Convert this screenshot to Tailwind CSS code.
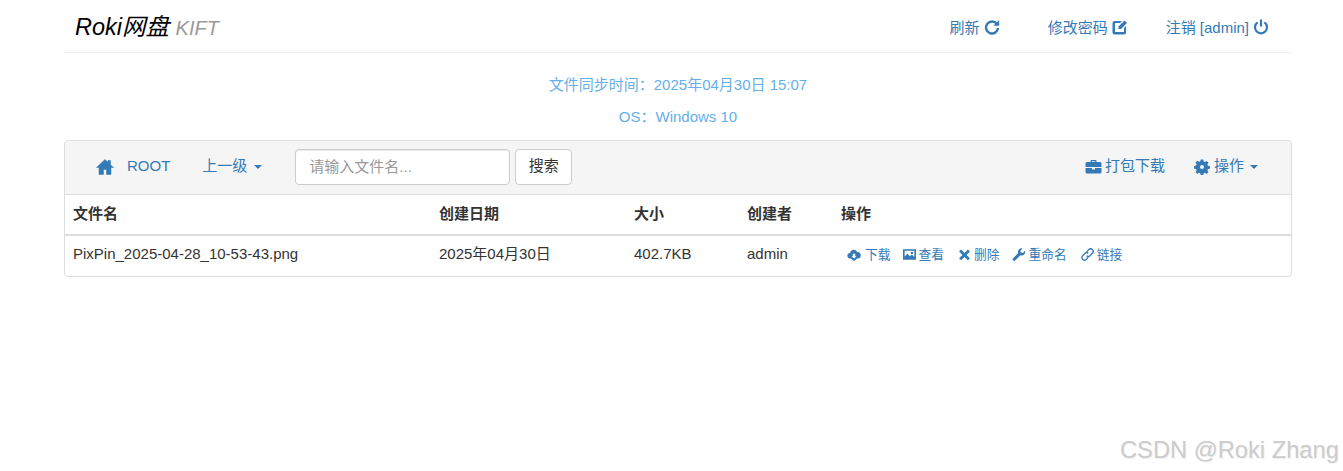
<!DOCTYPE html>
<html lang="en">
<head>
    <meta charset="UTF-8">
    <title>Roki网盘 KIFT</title>
    <script src="https://cdn.jsdelivr.net/npm/@tailwindcss/browser@4"></script>
</head>
<body class="relative h-[471px] overflow-hidden bg-white font-['Liberation_Sans','Noto_Sans_CJK_SC',sans-serif] text-[15px] text-[#333]">

    <div class="ml-[64px] w-[1228px]">

        <!-- Header -->
        <header class="flex h-[53px] items-center justify-between border-b border-[#eee] pt-[3px]">
            <h1 class="pl-[11px] text-[23.5px] italic text-black">Roki网盘 <span class="text-[20px] text-[#999]">KIFT</span></h1>
            <nav class="flex items-center pt-[2px] text-[#337ab7]">
                <a class="flex items-center gap-[4px]">刷新
                    <svg class="mb-[3px] h-[16px] w-[16px]" viewBox="0 0 16 16" fill="none" stroke="currentColor" stroke-width="2.4"><path d="M13 5.2A6 6 0 1 0 14 9"/><path d="M15.2 1v5.8H9.400z" fill="currentColor" stroke="none"/></svg>
                </a>
                <a class="ml-[48px] flex items-center gap-[4px]">修改密码
                    <svg class="mb-[3px] h-[16px] w-[16px]" viewBox="0 0 16 16" fill="currentColor"><path d="M2.500 2H10L8 4H3.500a.5.5 0 0 0-.5.5v8a.5.5 0 0 0 .5.5h8a.5.5 0 0 0 .5-.5V9l2-2v6.500a2 2 0 0 1-2 2H2.500a2 2 0 0 1-2-2v-9.500a2 2 0 0 1 2-2z"/><path d="M12.500 1.500l2.500 2.500-6 6H6.500V7.500z"/></svg>
                </a>
                <a class="ml-[38px] mr-[23px] flex items-center gap-[4px]">注销 [admin]
                    <svg class="mb-[3px] h-[16px] w-[16px]" viewBox="0 0 16 16" fill="none" stroke="currentColor" stroke-width="2.2"><path d="M4.600 3.400a6 6 0 1 0 6.800 0"/><path d="M8 .5v7"/></svg>
                </a>
            </nav>
        </header>

        <!-- Sync info -->
        <div class="flex flex-col items-center pt-[21px] text-[#66afe9]">
            <p class="h-[32px] leading-[21px]">文件同步时间：2025年04月30日 15:07</p>
            <p class="h-[34px] leading-[21px]">OS：Windows 10</p>
        </div>

        <!-- File panel -->
        <main class="overflow-hidden rounded-[4px] border border-[#ddd]">
            <div class="flex h-[54px] items-center justify-between border-b border-[#ddd] bg-[#f5f5f5] pb-[2px] text-[#337ab7]">
                <div class="flex items-center">
                    <svg class="ml-[31px] h-[18px] w-[18px]" viewBox="0 0 18 18" fill="currentColor" stroke="currentColor" stroke-width=".5"><path d="M9 1.500L.5 9.500h2.500v7h4.500v-5h3v5H15v-7h2.500L14.500 6.700V2.500h-2.500v1.800z"/></svg>
                    <span class="ml-[13px]">ROOT</span>
                    <span class="ml-[32px]">上一级</span>
                    <span class="ml-[7px] h-0 w-0 border-x-[4px] border-t-[4px] border-x-transparent border-t-current"></span>
                    <input class="ml-[33px] h-[36px] w-[215px] rounded-[4px] border border-[#ccc] bg-white px-[13px] text-[#555] shadow-[inset_0_1px_1px_rgba(0,0,0,0.075)] placeholder:text-[#999]" placeholder="请输入文件名...">
                    <button class="ml-[5px] h-[36px] w-[57px] rounded-[4px] border border-[#ccc] bg-white text-[#333]">搜索</button>
                </div>
                <div class="flex items-center pr-[33px]">
                    <svg class="h-[16px] w-[17px]" viewBox="0 0 16 16" fill="currentColor"><path d="M5 3V2a1 1 0 0 1 1-1h4a1 1 0 0 1 1 1v1h3.500A1.500 1.500 0 0 1 16 4.500V8H0V4.500A1.500 1.500 0 0 1 1.500 3zm1.300 0h3.400V2.300H6.300zM0 9h6.500v1.500h3V9H16v4a1.500 1.500 0 0 1-1.500 1.500h-13A1.500 1.500 0 0 1 0 13z"/></svg>
                    <span class="ml-[3px]">打包下载</span>
                    <svg class="ml-[29px] h-[16px] w-[16px]" viewBox="0 0 16 16" fill="currentColor" fill-rule="evenodd"><path d="M6.700.5h2.600l.4 2 1.300.5 1.700-1.100 1.800 1.800-1.100 1.700.5 1.300 2 .4v2.600l-2 .4-.5 1.300 1.100 1.700-1.800 1.800-1.700-1.100-1.300.5-.4 2H6.700l-.4-2-1.300-.5-1.700 1.100-1.800-1.800 1.100-1.700-.5-1.300-2-.4V6.900l2-.4.5-1.300-1.100-1.700 1.800-1.800 1.700 1.100 1.300-.5zM8 6a2 2 0 1 0 0 4 2 2 0 0 0 0-4z"/></svg>
                    <span class="ml-[4px]">操作</span>
                    <span class="ml-[6px] h-0 w-0 border-x-[4px] border-t-[4px] border-x-transparent border-t-current"></span>
                </div>
            </div>

            <table class="w-full table-fixed">
                <thead>
                    <tr class="h-[40px] border-b-2 border-[#ddd] text-left">
                        <th class="w-[366px] pl-[8px] font-bold">文件名</th>
                        <th class="w-[195px] pl-[8px] font-bold">创建日期</th>
                        <th class="w-[113px] pl-[8px] font-bold">大小</th>
                        <th class="w-[94px] pl-[8px] font-bold">创建者</th>
                        <th class="pl-[8px] font-bold">操作</th>
                    </tr>
                </thead>
                <tbody>
                    <tr class="h-[41px]">
                        <td class="pb-[3px] pl-[8px]">PixPin_2025-04-28_10-53-43.png</td>
                        <td class="pb-[3px] pl-[8px]">2025年04月30日</td>
                        <td class="pb-[3px] pl-[8px]">402.7KB</td>
                        <td class="pb-[3px] pl-[8px]">admin</td>
                        <td class="pb-[3px] pl-[14px]">
                            <div class="flex items-center text-[12.75px] text-[#337ab7]">
                                <svg class="h-[13px] w-[14px]" viewBox="0 0 16 16" fill="currentColor"><path d="M4 13H3.500a3.500 3.500 0 0 1-.3-7A4.500 4.500 0 0 1 11.800 4.800 4 4 0 0 1 12.500 13H12l-4 3zM6.500 7v3H4.800L8 13l3.200-3H9.500V7z" fill-rule="evenodd"/></svg>
                                <span class="ml-[4px]">下载</span>
                                <svg class="ml-[12px] h-[13px] w-[13px]" viewBox="0 0 16 16" fill="currentColor" fill-rule="evenodd"><path d="M0 1.500h16v13H0zM2 3.500v7l3.500-3.500 3 3 2.500-2 3 3V3.500zM11 4.500a1.500 1.500 0 1 1 0 3 1.500 1.500 0 0 1 0-3z"/></svg>
                                <span class="ml-[3px]">查看</span>
                                <svg class="ml-[14px] h-[13px] w-[13px]" viewBox="0 0 16 16" fill="currentColor"><path d="M3.800 1.800L8 6l4.200-4.200 2.500 2.500L10.500 8.500l4.200 4.200-2.500 2.500L8 11l-4.200 4.200-2.500-2.500 4.200-4.200-4.200-4.200z"/></svg>
                                <span class="ml-[3px]">删除</span>
                                <svg class="ml-[12px] h-[13px] w-[14px]" viewBox="0 0 16 16" fill="currentColor"><path d="M15.500 3.500l-2.800 2.800-2.300-.7-.7-2.300L12.500.5a4.500 4.500 0 0 0-5.500 5.800L.8 12.500a1.800 1.800 0 0 0 2.700 2.700L9.700 9a4.500 4.500 0 0 0 5.800-5.500z"/></svg>
                                <span class="ml-[3px]">重命名</span>
                                <svg class="ml-[14px] h-[13px] w-[13px]" viewBox="0 0 16 16" fill="none" stroke="currentColor" stroke-width="1.700"><path d="M7 4.500l2.500-2.500a3 3 0 0 1 4.500 4.500L11 9.500a3 3 0 0 1-4 0"/><path d="M9 11.500L6.500 14A3 3 0 0 1 2 9.500L5 6.500a3 3 0 0 1 4 0"/></svg>
                                <span class="ml-[3px]">链接</span>
                            </div>
                        </td>
                    </tr>
                </tbody>
            </table>
        </main>
    </div>

    <!-- Watermark -->
    <div class="absolute left-[1120px] top-[435px] whitespace-nowrap text-[23.7px] leading-[30px] text-[#ccc] [text-shadow:1px_1px_1px_#eee]">CSDN @Roki Zhang</div>

</body>
</html>
